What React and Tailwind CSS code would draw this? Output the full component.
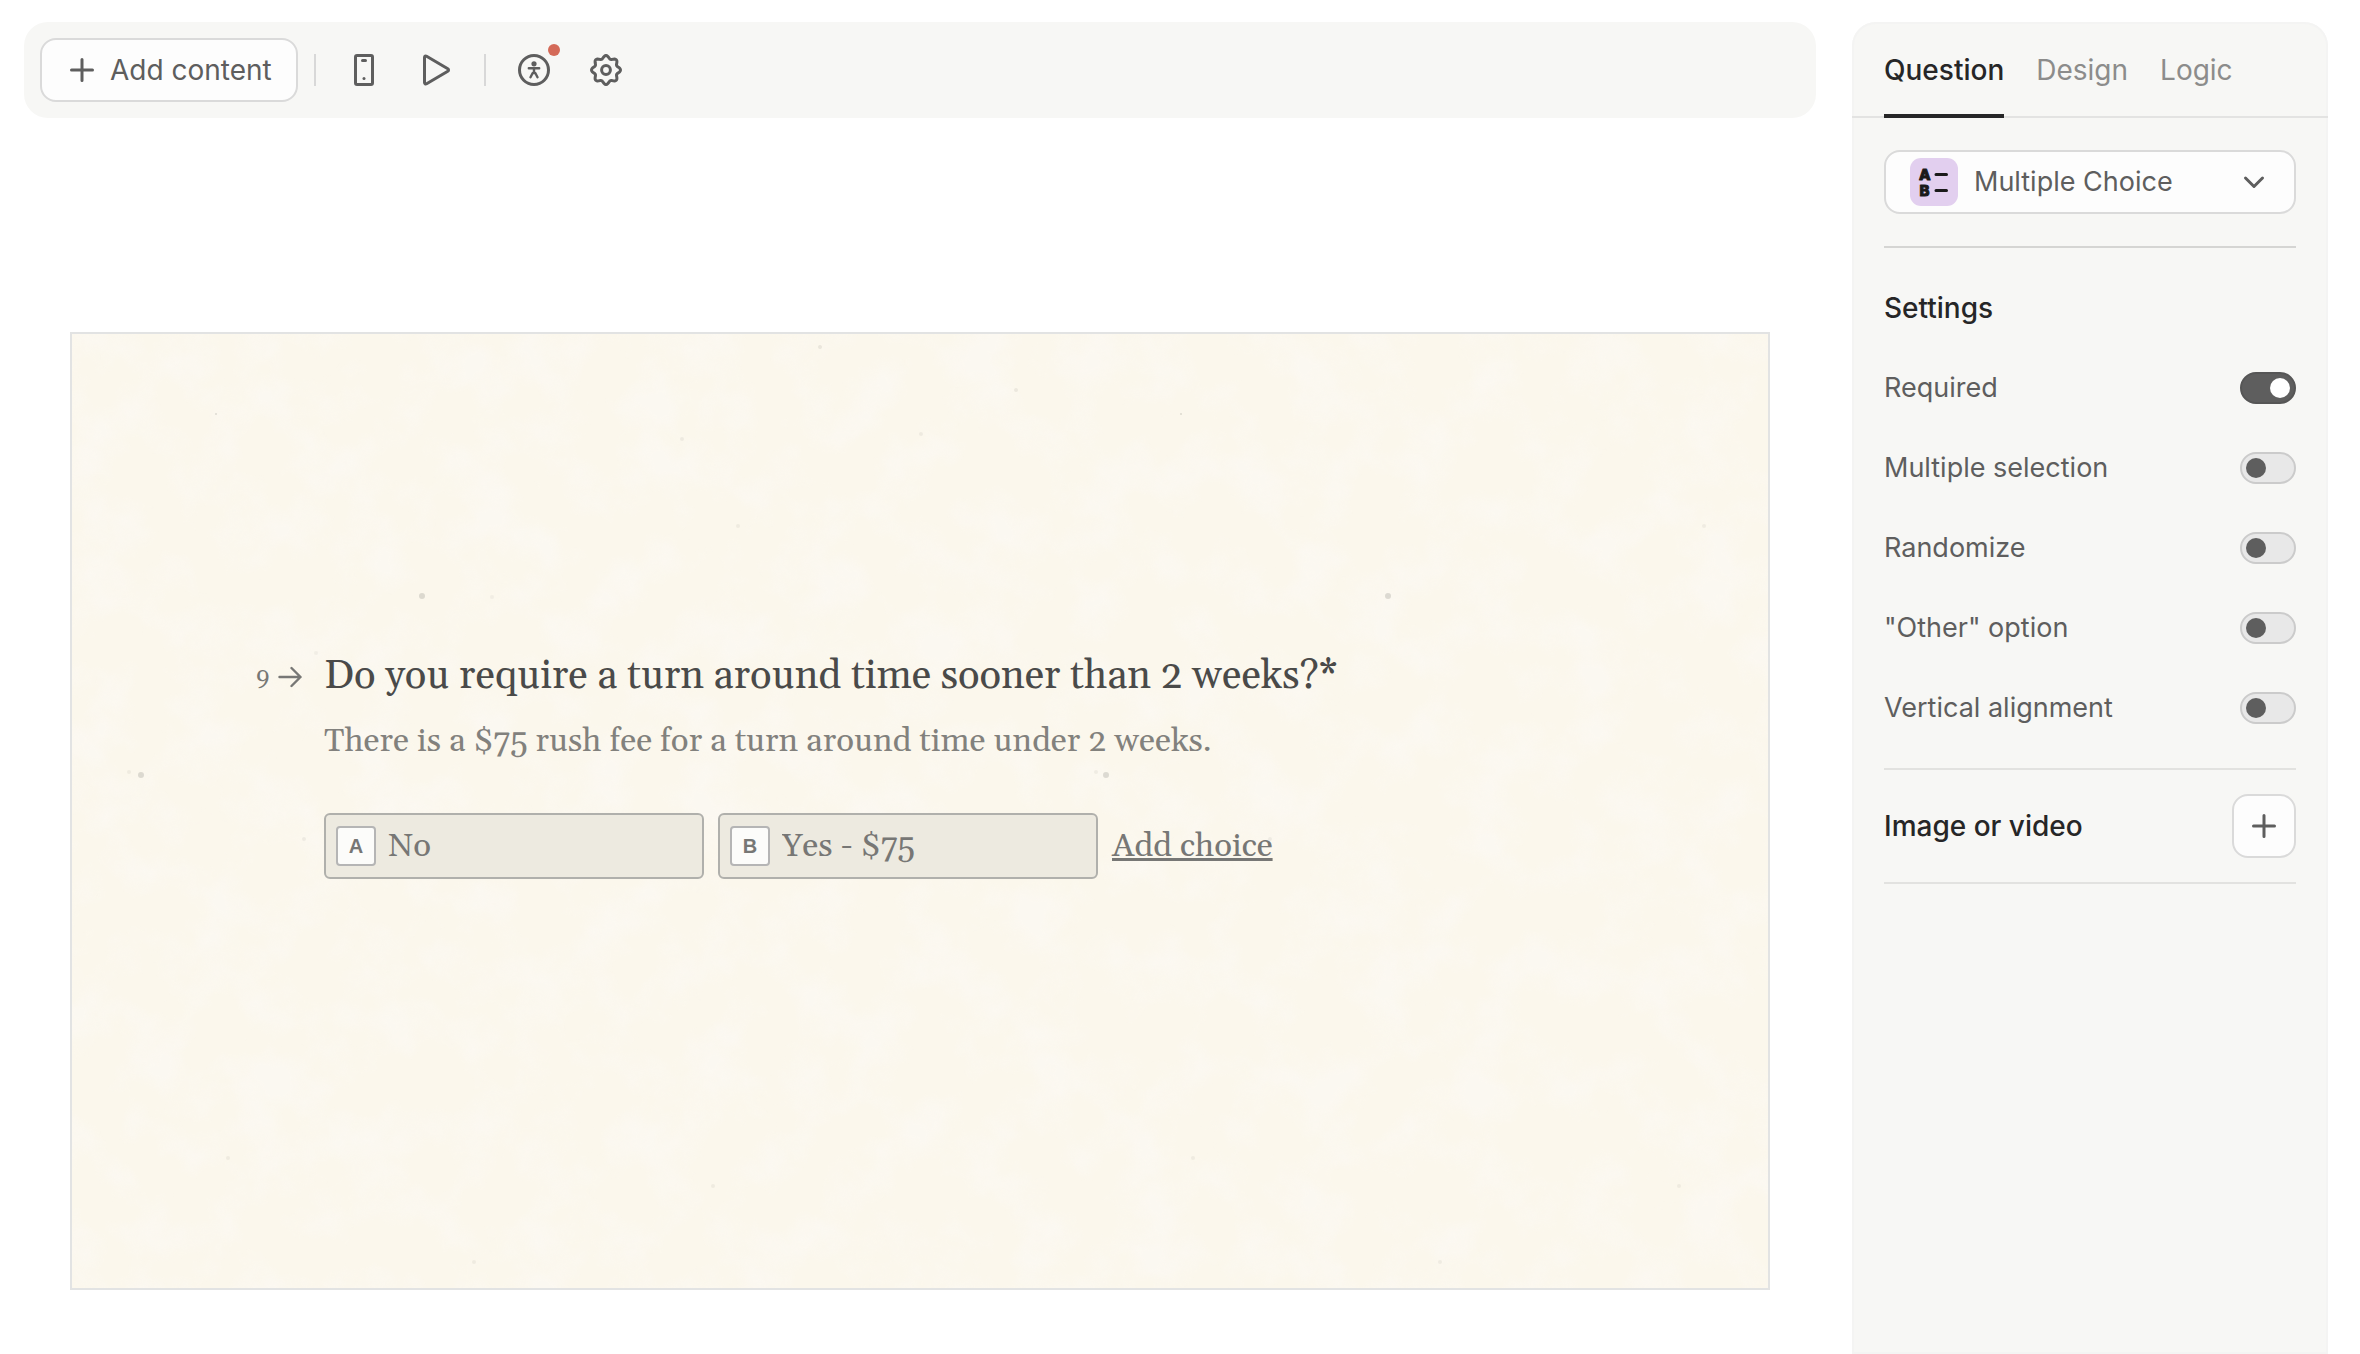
const SETTINGS = [
  { id: "required", label: "Required", on: true },
  { id: "multiple", label: "Multiple selection", on: false },
  { id: "randomize", label: "Randomize", on: false },
  { id: "other", label: '"Other" option', on: false },
  { id: "vertical", label: "Vertical alignment", on: false },
];

const CHOICES = [
  { key: "A", text: "No" },
  { key: "B", text: "Yes - $75" },
];

const SPECKS = [
  [350, 262, 3, 0.18],
  [1316, 262, 3, 0.18],
  [69, 441, 3, 0.18],
  [1034, 441, 3, 0.18],
  [57, 438, 2, 0.07],
  [1024, 438, 2, 0.07],
  [748, 13, 2, 0.1],
  [944, 56, 2, 0.09],
  [610, 105, 2, 0.08],
  [144, 80, 1, 0.18],
  [1109, 80, 1, 0.18],
  [849, 100, 2, 0.08],
  [666, 192, 2, 0.07],
  [1632, 192, 2, 0.07],
  [420, 263, 2, 0.06],
  [244, 319, 2, 0.06],
  [232, 505, 2, 0.08],
  [1198, 505, 2, 0.08],
  [156, 824, 2, 0.07],
  [1121, 824, 2, 0.07],
  [641, 852, 2, 0.07],
  [1607, 852, 2, 0.07],
  [402, 928, 2, 0.07],
  [1368, 928, 2, 0.07],
];

const GEAR =
  "M" +
  Array.from({ length: 96 }, (_, i) => {
    const a = (i / 96) * Math.PI * 2;
    const r = 13 + 1.5 * Math.cos(8 * a);
    return `${(16 + r * Math.sin(a)).toFixed(2)} ${(16 - r * Math.cos(a)).toFixed(2)}`;
  }).join("L") +
  "Z";

function Icon({ children, className = "size-8", box = 32 }) {
  return (
    <svg
      viewBox={`0 0 ${box} ${box}`}
      className={className}
      fill="none"
      stroke="currentColor"
      strokeWidth="3"
      strokeLinecap="round"
      strokeLinejoin="round"
      aria-hidden="true"
    >
      {children}
    </svg>
  );
}

function Plus() {
  return (
    <Icon className="size-7 shrink-0" box={28}>
      <path d="M14 3.5v21M3.5 14h21" />
    </Icon>
  );
}

function Toolbar() {
  return (
    <header className="flex h-24 items-center rounded-3xl bg-[#f7f7f5] px-4">
      <button className="flex h-16 items-center gap-3.5 rounded-2xl border-2 border-[#dadada] bg-[#fdfdfd] pr-6 pl-[26px] text-[28px]">
        <Plus />
        Add content
      </button>
      <div className="mx-4 h-8 w-0.5 bg-[#d8d8d8]" />
      <div className="flex gap-10 px-4">
        <button aria-label="Mobile preview">
          <Icon>
            <rect x="7.5" y="1.5" width="17" height="29" rx="1.5" />
            <path d="M14.5 6.5h3" />
            <circle cx="16" cy="24.5" r="1.5" fill="currentColor" stroke="none" />
          </Icon>
        </button>
        <button aria-label="Play">
          <Icon>
            <path d="M4.500 3.400v25.200c0 1.200 1.100 1.700 2.100 1.100L27.800 17.200c1-.6 1-1.800 0-2.400L6.600 2.300c-1-.6-2.100-.1-2.100 1.100Z" />
          </Icon>
        </button>
      </div>
      <div className="mx-4 h-8 w-0.5 bg-[#d8d8d8]" />
      <div className="flex gap-10 px-4">
        <button aria-label="Accessibility" className="relative">
          <Icon>
            <circle cx="16" cy="16" r="14.5" />
            <circle cx="16" cy="9.8" r="2.6" fill="currentColor" stroke="none" />
            <path
              d="M10.8 14.200h10.400M16 14.500v4.500M12.500 23.200l2.200-4.200h2.600l2.200 4.200"
              strokeWidth="2.4"
            />
          </Icon>
          <span className="absolute -top-2.5 -right-2.5 size-3 rounded-full bg-[#d46a58]" />
        </button>
        <button aria-label="Settings">
          <Icon>
            <path d={GEAR} />
            <circle cx="16" cy="16" r="4.4" />
          </Icon>
        </button>
      </div>
    </header>
  );
}

function Paper() {
  return (
    <svg
      className="absolute inset-0 size-full"
      viewBox="0 0 1696 954"
      preserveAspectRatio="none"
      aria-hidden="true"
    >
      <filter id="mottle" x="0" y="0" width="100%" height="100%">
        <feTurbulence type="fractalNoise" baseFrequency="0.018" numOctaves="4" seed="7" />
        <feColorMatrix values="0 0 0 0 0.976  0 0 0 0 0.957  0 0 0 0 0.95  3 0 0 0 -1.3" />
      </filter>
      <rect width="1696" height="954" filter="url(#mottle)" opacity="0.4" />
      {SPECKS.map(([x, y, r, o]) => (
        <circle key={`${x}-${y}`} cx={x} cy={y} r={r} fill="#55554d" opacity={o} />
      ))}
    </svg>
  );
}

function QuestionCard() {
  return (
    <div className="mx-[46px] mt-[214px] mb-16 border-2 border-[#e2e3e3]">
      <section className="relative aspect-video bg-[#fbf7ec] font-['Gelasio',Georgia,'Liberation_Serif',serif] text-[#777775]">
        <Paper />
        <div className="relative grid grid-cols-[68px_1fr] pt-[315px] pr-10 pl-[184px]">
          <div className="flex h-14 items-center gap-2 text-2xl">
            9
            <Icon className="size-6" box={24}>
              <path d="M1.500 12h21M13.500 3 22.500 12l-9 9" strokeWidth="2.4" />
            </Icon>
          </div>
          <h1 className="text-[40px] leading-14 text-[#4a4a49]">
            Do you require a turn around time sooner than 2 weeks?*
          </h1>
          <div className="col-start-2">
            <p className="mt-3 text-[33px] leading-12 text-[#82817d]">
              There is a $75 rush fee for a turn around time under 2 weeks.
            </p>
            <div className="mt-12 flex items-center gap-3.5">
              {CHOICES.map((c) => (
                <label
                  key={c.key}
                  className="flex h-[66px] w-[380px] items-center gap-3 rounded-md border-2 border-[#b0b0ac] bg-[#edeae0] px-2.5"
                >
                  <span className="flex size-10 shrink-0 items-center justify-center rounded-sm border-2 border-[#b5b5b5] bg-[#fcfcfa] font-['Liberation_Sans',Arial,sans-serif] text-xl font-bold">
                    {c.key}
                  </span>
                  <input
                    type="text"
                    defaultValue={c.text}
                    aria-label={`Choice ${c.key}`}
                    className="min-w-0 flex-1 bg-transparent text-[33px] leading-12 outline-none"
                  />
                </label>
              ))}
              <button className="text-[33px] leading-12 underline decoration-[3px] underline-offset-2">
                Add choice
              </button>
            </div>
          </div>
        </div>
      </section>
    </div>
  );
}

function Toggle({ id, on }) {
  return (
    <input
      id={id}
      type="checkbox"
      role="switch"
      defaultChecked={on}
      className="h-8 w-14 shrink-0 appearance-none rounded-full border-2 border-[#cbcbcb] bg-[#e8e8e8] p-1 before:block before:size-5 before:rounded-full before:bg-[#5e5e5e] checked:border-[#565656] checked:bg-[#5e5e5e] checked:before:ml-auto checked:before:bg-white"
    />
  );
}

function SidePanel() {
  return (
    <aside className="flex w-[476px] shrink-0 flex-col rounded-t-3xl bg-[#f7f7f5] ring-2 ring-[#f4f4f3] ring-inset">
      <nav
        role="tablist"
        className="flex h-24 gap-8 border-b-2 border-[#e3e3e2] px-8 text-[28px] text-[#8c8c8b]"
      >
        <button
          role="tab"
          aria-selected="true"
          className="-mb-0.5 border-b-4 border-[#262627] pt-1 font-medium text-[#262627]"
        >
          Question
        </button>
        <button role="tab" aria-selected="false" className="pt-0.5">
          Design
        </button>
        <button role="tab" aria-selected="false" className="pt-0.5">
          Logic
        </button>
      </nav>
      <div className="px-8">
        <div className="border-b-2 border-[#d5d5d3] py-8">
          <div className="flex h-16 items-center gap-3 rounded-2xl border-2 border-[#dadada] bg-[#fdfdfd] px-6">
            <svg viewBox="0 0 48 48" className="size-12 shrink-0" aria-hidden="true">
              <rect width="48" height="48" rx="11" fill="#e2cfef" />
              <g
                className="font-['Inter',sans-serif] text-[15px] font-extrabold"
                fill="#1a1a1a"
                stroke="#1a1a1a"
                strokeWidth="1"
                strokeLinejoin="round"
              >
                <text x="9" y="22">A</text>
                <text x="9.5" y="38">B</text>
              </g>
              <path
                d="M26 16.500h10.500M26 32.500h10.500"
                stroke="#1a1a1a"
                strokeWidth="3"
                strokeLinecap="round"
              />
            </svg>
            <select
              aria-label="Question type"
              className="min-w-0 flex-1 appearance-none bg-transparent pl-1 text-[27px] outline-none"
            >
              <option>Multiple Choice</option>
            </select>
            <Icon className="pointer-events-none size-8 shrink-0">
              <path d="m7.500 12 8.500 8.500 8.500-8.500" />
            </Icon>
          </div>
        </div>
        <section className="border-b-2 border-[#e2e2e0] pt-10 pb-5">
          <h2 className="mb-5 text-[28px] leading-10 font-medium text-[#262627]">Settings</h2>
          {SETTINGS.map((s) => (
            <div key={s.id} className="flex h-20 items-center justify-between text-[27px]">
              <label htmlFor={s.id}>{s.label}</label>
              <Toggle id={s.id} on={s.on} />
            </div>
          ))}
        </section>
        <section className="flex items-center justify-between border-b-2 border-[#e2e2e0] py-6">
          <h2 className="text-[28px] font-medium text-[#262627]">Image or video</h2>
          <button
            aria-label="Add image or video"
            className="flex size-16 items-center justify-center rounded-2xl border-2 border-[#dadada] bg-[#fdfdfd]"
          >
            <Plus />
          </button>
        </section>
      </div>
    </aside>
  );
}

export default function App() {
  return (
    <div className="flex min-h-screen gap-9 bg-white pt-[22px] pr-8 pl-6 font-['Inter','Liberation_Sans',sans-serif] text-[#5e5e5e]">
      <main className="min-w-0 flex-1">
        <Toolbar />
        <QuestionCard />
      </main>
      <SidePanel />
    </div>
  );
}
